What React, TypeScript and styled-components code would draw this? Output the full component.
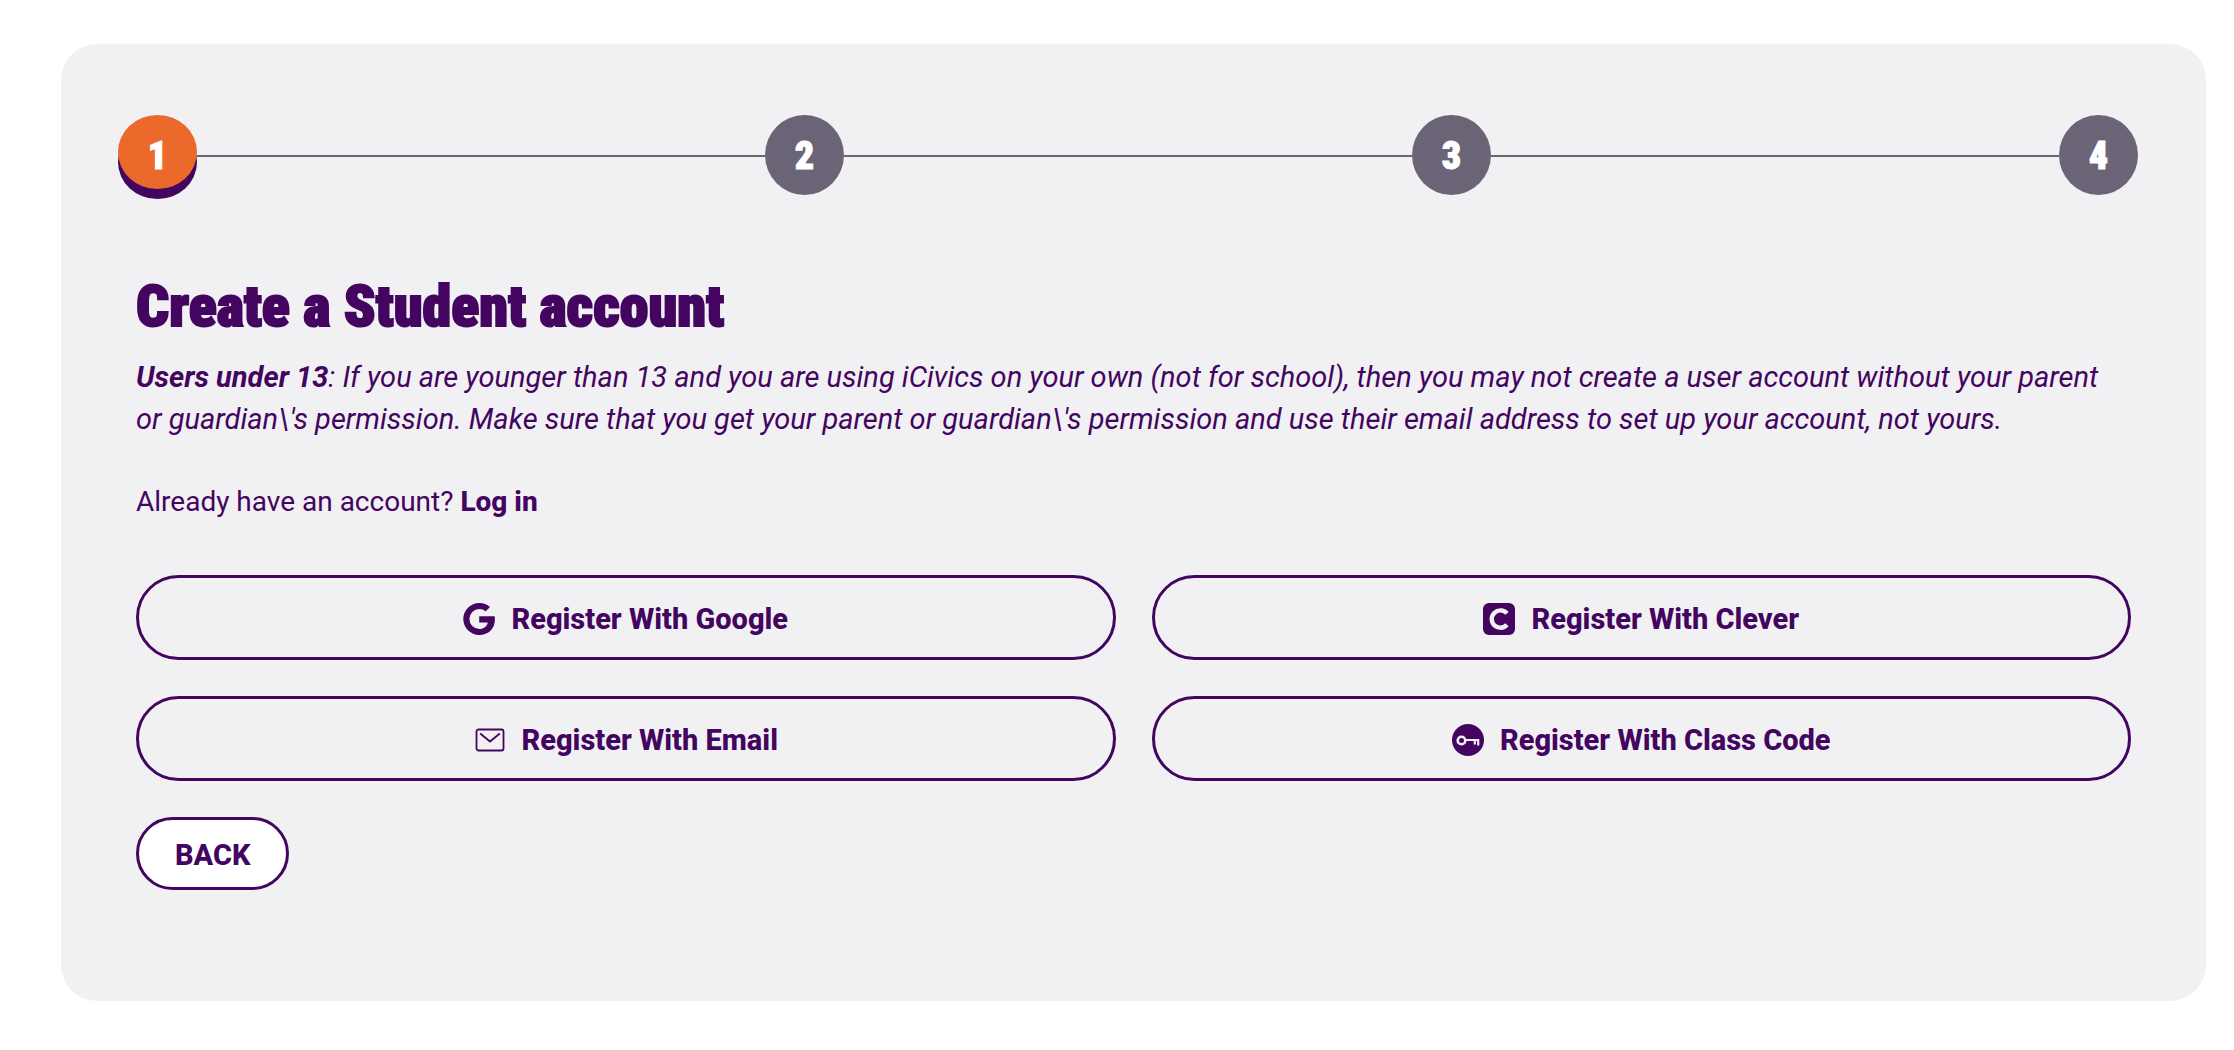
import React from "react";
import styled, { createGlobalStyle, css } from "styled-components";

const ink = "#43055f";
const panel = "#f1f1f4";
const slate = "#6b6476";
const body = `Roboto, "Liberation Sans", sans-serif`;
const narrow = `"Roboto Condensed", "Liberation Sans Narrow", Roboto, sans-serif`;

const GlobalStyle = createGlobalStyle`
  *, *::before, *::after { box-sizing: border-box; }
  body { margin: 0; background: #fff; color: ${ink}; font-family: ${body}; }
`;

const Card = styled.main`
  margin: 44px 28px 49px 61px;
  padding: 71px 75px 111px;
  background: ${panel};
  border-radius: 36px;
`;

const Steps = styled.ol`
  display: flex;
  align-items: center;
  height: 80px;
  margin: 0 -7px 0 -18px;
  padding: 0;
  list-style: none;
`;

const Step = styled.li`
  display: flex;
  align-items: center;
  & + & { flex: 1; }
  & + &::before {
    content: "";
    flex: 1;
    height: 2px;
    margin-top: 2px;
    background: ${slate};
  }
`;

const StepDot = styled.span<{ $current?: boolean }>`
  display: grid;
  place-items: center;
  width: 79px;
  height: 80px;
  padding-top: 2px;
  border-radius: 50%;
  background: ${slate};
  color: #fff;
  font-family: ${narrow};
  font-size: 38px;
  font-weight: 900;
  line-height: 44px;
  -webkit-text-stroke: 1px #fff;
  ${({ $current }) =>
    $current &&
    css`
      height: 74px;
      margin-bottom: 6px;
      padding-top: 8px;
      background: #ec692c;
      box-shadow: 0 10px 0 ${ink};
    `}
`;

const Title = styled.h1`
  margin: 73px 0 0;
  font-family: ${narrow};
  font-size: 58px;
  font-weight: 900;
  line-height: 76px;
  -webkit-text-stroke: 2px ${ink};
`;

const Copy = styled.p`
  margin: 12px 0 0;
  font-size: 28px;
  line-height: 42px;
`;

const Notice = styled(Copy)`
  padding-right: 24px;
  font-size: 29px;
  font-style: italic;
`;

const Prompt = styled(Copy)`
  margin-top: 41px;
`;

const LoginLink = styled.a`
  color: inherit;
  font-weight: 800;
  text-decoration: none;
`;

const Options = styled.div`
  display: grid;
  grid-template-columns: 1fr 1fr;
  gap: 36px;
  margin: 52px 0 36px;
`;

const Pill = styled.button`
  display: flex;
  align-items: center;
  justify-content: center;
  gap: 16px;
  height: 85px;
  padding: 2px 36px 0;
  border: 3px solid ${ink};
  border-radius: 43px;
  background: transparent;
  color: ${ink};
  font-family: ${body};
  font-size: 29px;
  font-weight: 800;
  line-height: 36px;
  cursor: pointer;
`;

const BackPill = styled(Pill)`
  height: 73px;
  background: #fff;
`;

const Icon = styled.svg`
  flex: none;
  width: 32px;
  height: 32px;
`;

const GoogleIcon = () => (
  <Icon viewBox="0 0 32 32" aria-hidden="true">
    <path
      fill={ink}
      d="M16.2 13.2h15.4c.2 1 .3 2 .3 3.1C31.9 25.7 25.600 32 16.300 32A16 16 0 1 1 16.300 0c4.200 0 7.900 1.500 10.700 4.100l-4.500 4.400C20.800 6.900 18.700 6.100 16.300 6.100a9.900 9.900 0 0 0 0 19.800c4.500 0 7.700-2.500 8.500-6.500h-8.600z"
    />
  </Icon>
);

const CleverIcon = () => (
  <Icon viewBox="0 0 32 32" aria-hidden="true">
    <rect width="32" height="32" rx="6" fill={ink} />
    <path d="M24 10.400A8.700 8.700 0 1 0 24 21.800" fill="none" stroke={panel} strokeWidth="4.400" />
  </Icon>
);

const MailIcon = () => (
  <Icon viewBox="0 0 32 32" fill="none" stroke={ink} strokeWidth="1.800" aria-hidden="true">
    <rect x="2.500" y="5.500" width="27" height="21" rx="2" />
    <path d="M6.200 9.500l9.800 8 9.800-8" />
  </Icon>
);

const KeyIcon = () => (
  <Icon viewBox="0 0 32 32" fill="none" stroke={panel} aria-hidden="true">
    <circle cx="16" cy="16" r="16" fill={ink} stroke="none" />
    <circle cx="9.500" cy="16.500" r="3.800" strokeWidth="2.600" />
    <path d="M13.500 16H26.200v5.500M22.800 16v4.500" strokeWidth="2.200" />
  </Icon>
);

const options = [
  { label: "Register With Google", Glyph: GoogleIcon },
  { label: "Register With Clever", Glyph: CleverIcon },
  { label: "Register With Email", Glyph: MailIcon },
  { label: "Register With Class Code", Glyph: KeyIcon },
];

export default function App() {
  return (
    <>
      <GlobalStyle />
      <Card>
        <Steps>
          {[1, 2, 3, 4].map((n) => (
            <Step key={n} aria-current={n === 1 ? "step" : undefined}>
              <StepDot $current={n === 1}>{n}</StepDot>
            </Step>
          ))}
        </Steps>
        <Title>Create a Student account</Title>
        <Notice>
          <strong>Users under 13</strong>: If you are younger than 13 and you are using iCivics on
          your own (not for school), then you may not create a user account without your parent or
          guardian\'s permission. Make sure that you get your parent or guardian\'s permission and
          use their email address to set up your account, not yours.
        </Notice>
        <Prompt>
          Already have an account? <LoginLink href="#login">Log in</LoginLink>
        </Prompt>
        <Options>
          {options.map(({ label, Glyph }) => (
            <Pill key={label} type="button">
              <Glyph />
              {label}
            </Pill>
          ))}
        </Options>
        <BackPill type="button">BACK</BackPill>
      </Card>
    </>
  );
}
